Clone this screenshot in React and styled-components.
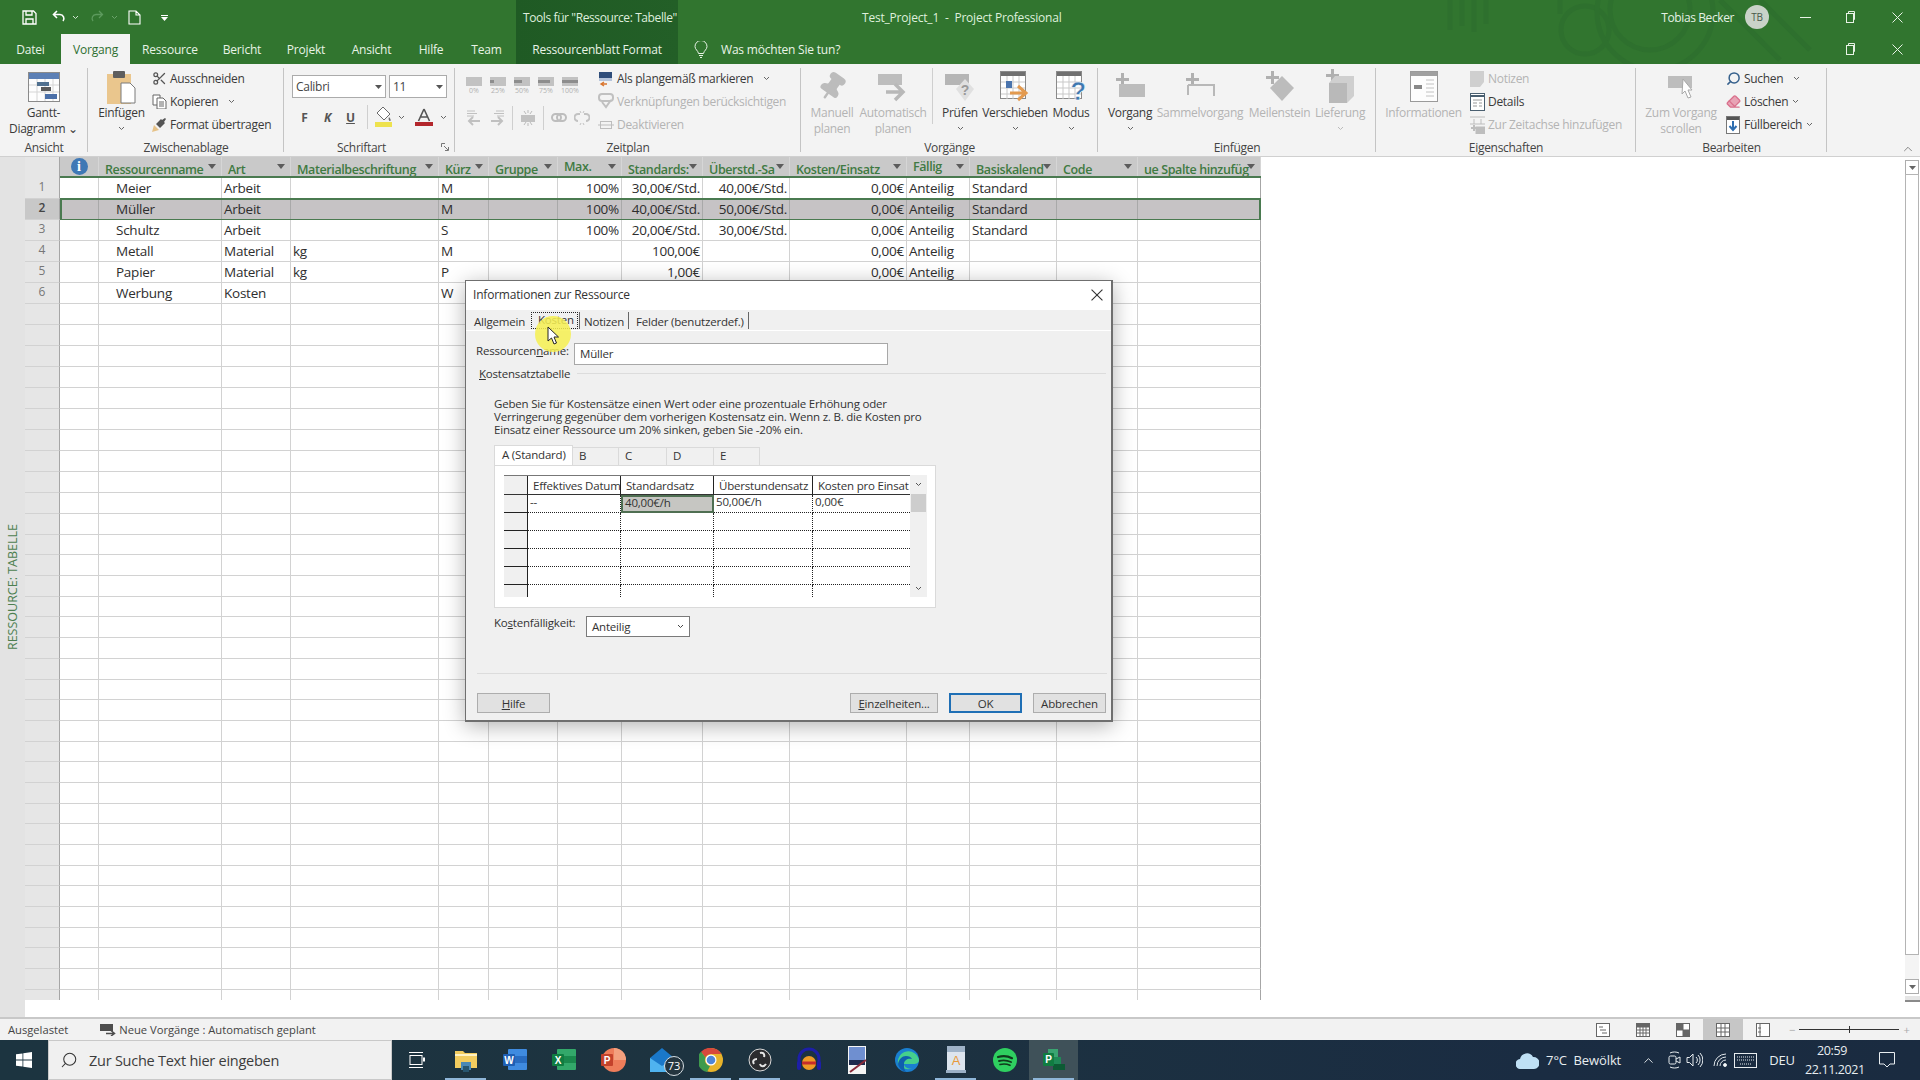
import React from 'react';
import styled, { createGlobalStyle } from 'styled-components';
import { Scissors, Search, ChevronUp, Pin, Eraser } from 'lucide-react';

const UI = '"Open Sans", "Noto Sans", "Liberation Sans", sans-serif';

const GlobalStyle = createGlobalStyle`
  html, body { margin: 0; padding: 0; background: #fff; }
  body { font-family: ${UI}; color: #333; }
  * { box-sizing: border-box; }
`;

const Page = styled.div`
  position: relative;
  width: 1920px;
  height: 1080px;
  overflow: hidden;
  display: flex;
  flex-direction: column;
  background: #fff;
`;

/* ---------- header ---------- */
const Header = styled.header`
  position: relative;
  height: 64px;
  flex: none;
  color: #e4f1e4;
  background: linear-gradient(90deg, #31752f 516px, #1f5a24 516px, #235f27 678px, #31752f 678px);
`;
const Decor = styled.svg`
  position: absolute;
  left: 1440px;
  top: 0;
`;
const TitleRow = styled.div`
  position: relative;
  height: 34px;
  display: flex;
  align-items: center;
  font-size: 12px;
  letter-spacing: -0.2px;
`;
const Quick = styled.div`
  width: 516px;
  display: flex;
  align-items: center;
  padding-left: 22px;
`;
const QuickSlot = styled.span`
  display: flex;
  margin-left: ${(p) => p.$ml || 0}px;
`;
const ContextName = styled.div`
  width: 162px;
  padding-left: 7px;
  white-space: nowrap;
  color: #dfeedd;
  letter-spacing: -0.4px;
`;
const ProjectName = styled.div`
  padding-left: 184px;
  white-space: pre;
  color: #dff0dc;
`;
const UserBox = styled.div`
  margin-left: auto;
  display: flex;
  align-items: center;
`;
const UserName = styled.span`
  color: #e4f1e4;
  letter-spacing: -0.4px;
`;
const Avatar = styled.span`
  width: 24px;
  height: 24px;
  border-radius: 50%;
  margin: 0 13px 0 11px;
  background: #c9d2c8;
  color: #4a5a4a;
  font-size: 10px;
  display: flex;
  align-items: center;
  justify-content: center;
`;
const WinBtn = styled.span`
  width: 46px;
  display: flex;
  justify-content: center;
  color: #e8f3e6;
`;
const TabsRow = styled.nav`
  position: relative;
  height: 30px;
  display: flex;
  align-items: flex-end;
  font-size: 12px;
  letter-spacing: -0.2px;
`;
const Tab = styled.span`
  height: 30px;
  display: flex;
  align-items: center;
  justify-content: center;
  flex: none;
  width: ${(p) => p.$w}px;
  color: ${(p) => (p.$on ? '#2e6f31' : '#e8f3e6')};
  background: ${(p) => (p.$on ? '#f3f3f3' : 'transparent')};
`;
const TellMe = styled.span`
  display: flex;
  align-items: center;
  height: 30px;
  gap: 13px;
  margin-left: 16px;
  color: #eaf4e8;
`;
const DocButtons = styled.div`
  margin-left: auto;
  height: 30px;
  display: flex;
  align-items: center;
`;

/* ---------- ribbon ---------- */
const Ribbon = styled.div`
  position: relative;
  height: 93px;
  flex: none;
  display: flex;
  background: #f3f3f3;
  border-bottom: 1px solid #d0d0d0;
  font-size: 12px;
  letter-spacing: -0.3px;
`;
const Group = styled.section`
  position: relative;
  flex: none;
  width: ${(p) => p.$w}px;
  display: flex;
  flex-direction: column;
  &::after {
    content: '';
    position: absolute;
    right: 0;
    top: 4px;
    bottom: 4px;
    width: 1px;
    background: #c4c4c4;
  }
`;
const GroupBody = styled.div`
  height: 75px;
  display: flex;
  gap: ${(p) => p.$gap ?? 5}px;
  padding: 4px 0 0 ${(p) => p.$pad ?? 10}px;
`;
const GroupLabel = styled.div`
  height: 17px;
  line-height: 17px;
  text-align: center;
  color: #444;
  position: relative;
  letter-spacing: -0.3px;
  padding-right: ${(p) => p.$pr || 0}px;
`;
const Launcher = styled.svg`
  position: absolute;
  right: 6px;
  top: 4px;
`;
const BigBtn = styled.div`
  flex: none;
  width: ${(p) => p.$w}px;
  display: flex;
  flex-direction: column;
  align-items: center;
  color: ${(p) => (p.$off ? '#b4b4b4' : '#3a3a3a')};
  line-height: 16px;
  white-space: nowrap;
  margin-right: ${(p) => p.$mr || 0}px;
`;
const BigIcon = styled.div`
  height: 37px;
  display: flex;
  align-items: center;
  justify-content: center;
`;
const PinGlyph = styled(Pin)`
  transform: rotate(35deg);
`;
const MirrorSearch = styled(Search)`
  transform: scaleX(-1);
`;
const Caret = styled.svg`
  display: block;
  flex: none;
`;
const BigCaret = styled(Caret)`
  margin-top: 5px;
`;
const SmallCol = styled.div`
  display: flex;
  flex-direction: column;
  flex: none;
  margin-top: -1px;
  margin-left: ${(p) => p.$ml || 0}px;
`;
const SmallRow = styled.div`
  height: 23px;
  display: flex;
  align-items: center;
  gap: 3px;
  white-space: nowrap;
  color: ${(p) => (p.$off ? '#b4b4b4' : '#3a3a3a')};
`;
const SmallIcon = styled.span`
  width: 16px;
  height: 18px;
  display: flex;
  align-items: center;
  justify-content: center;
  flex: none;
`;
const RowCaret = styled(Caret)`
  margin-left: 7px;
`;
const TightCaret = styled(Caret)`
  margin-left: 1px;
`;
const FontCol = styled.div`
  display: flex;
  flex-direction: column;
  padding-top: 7px;
`;
const ComboRow = styled.div`
  display: flex;
  gap: 3px;
`;
const Combo = styled.div`
  width: ${(p) => p.$w}px;
  height: 23px;
  background: #fff;
  border: 1px solid #ababab;
  padding: 0 3px;
  display: flex;
  align-items: center;
  justify-content: space-between;
  color: #444;
`;
const FormatRow = styled.div`
  display: flex;
  align-items: center;
  height: 24px;
  margin-top: 7px;
  padding-left: 1px;
`;
const StyleBtn = styled.span`
  width: 23px;
  text-align: center;
  font-weight: 700;
  font-size: 12px;
  color: #555;
  font-style: ${(p) => (p.$i ? 'italic' : 'normal')};
  text-decoration: ${(p) => (p.$u ? 'underline' : 'none')};
`;
const ThinSep = styled.span`
  width: 1px;
  height: ${(p) => p.$h || 24}px;
  background: #cfcfcf;
  flex: none;
  margin: ${(p) => p.$m || '0'};
`;
const PlanCol = styled.div`
  width: 132px;
  flex: none;
  display: flex;
  flex-direction: column;
`;
const PercentRow = styled.div`
  display: flex;
  gap: 8px;
  padding-top: 9px;
`;
const Percent = styled.div`
  width: 16px;
  display: flex;
  flex-direction: column;
  align-items: center;
  font-size: 7px;
  letter-spacing: 0;
  line-height: 10px;
  color: #b0b0b0;
`;
const PlanRow = styled.div`
  display: flex;
  align-items: center;
  margin-top: 10px;
  gap: 7px;
`;
const Collapse = styled.span`
  position: absolute;
  right: 5px;
  bottom: 0;
  color: #666;
  display: flex;
`;

/* ---------- workspace ---------- */
const Workspace = styled.div`
  flex: 1;
  display: flex;
  min-height: 0;
`;
const SideBar = styled.div`
  width: 25px;
  flex: none;
  background: #e3e3e3;
  position: relative;
`;
const ViewName = styled.div`
  position: absolute;
  top: 367px;
  left: 4px;
  writing-mode: vertical-rl;
  transform: rotate(180deg);
  font-size: 12.5px;
  letter-spacing: 0;
  color: #4d7f50;
  white-space: nowrap;
`;
const Sheet = styled.div`
  flex: 1;
  height: 843px;
  overflow: hidden;
`;
const COLS = '35px 39px 123px 69px 148px 50px 69px 64px 81px 87px 117px 63px 87px 81px 123px';
const HeadRow = styled.div`
  display: grid;
  grid-template-columns: ${COLS};
  width: 1236px;
  height: 21px;
  position: relative;
  &::after {
    content: '';
    position: absolute;
    left: 35px;
    right: 0;
    bottom: 0;
    height: 2px;
    background: #4a7a50;
  }
`;
const HeadCorner = styled.div`
  background: #e6e6e6;
  border-right: 1px solid #a6a6a6;
`;
const HeadCell = styled.div`
  background: #c9c9c9;
  position: relative;
  overflow: hidden;
  padding: ${(p) => (p.$up ? '2px' : '5px')} 14px 0 6px;
  color: #3f7a42;
  font-size: 12.5px;
  font-weight: 600;
  letter-spacing: -0.4px;
  white-space: nowrap;
  line-height: 15px;
  border-right: 1px solid #d6d6d6;
`;
const InfoCell = styled.div`
  background: #c9c9c9;
  padding-top: 1px;
  display: flex;
  justify-content: center;
  border-right: 1px solid #d6d6d6;
`;
const FilterMark = styled.i`
  position: absolute;
  right: 5px;
  top: 7px;
  width: 0;
  height: 0;
  border-left: 4px solid transparent;
  border-right: 4px solid transparent;
  border-top: 5px solid #5c5c5c;
`;
const InfoDot = styled.span`
  width: 17px;
  height: 17px;
  border-radius: 50%;
  background: #3f78b5;
  color: #fff;
  font: 700 14px/17px "Liberation Serif", serif;
  text-align: center;
`;
const Row = styled.div`
  display: grid;
  grid-template-columns: ${COLS};
  width: 1236px;
  height: ${(p) => p.$h}px;
  position: relative;
  ${(p) =>
    p.$selected &&
    `&::after {
      content: '';
      position: absolute;
      left: 35px;
      right: 0;
      top: -1px;
      bottom: -1px;
      border: 2px solid #4a7a50;
    }`}
`;
const RowNum = styled.div`
  background: ${(p) => (p.$selected ? '#c8c8c8' : '#e6e6e6')};
  border-bottom: 1px solid #d2d2d2;
  border-right: 1px solid #a6a6a6;
  color: ${(p) => (p.$selected ? '#444' : '#777')};
  font-weight: ${(p) => (p.$selected ? 600 : 400)};
  text-align: center;
  font-size: 12px;
  line-height: 18px;
`;
const Cell = styled.div`
  background: ${(p) => (p.$selected ? '#c6c3c5' : '#fff')};
  border-right: 1px solid ${(p) => (p.$dark ? '#a6a6a6' : p.$selected ? '#a9a9a9' : '#d2d2d2')};
  border-bottom: 1px solid #d2d2d2;
  font-size: 13.5px;
  letter-spacing: -0.25px;
  line-height: 20px;
  color: #2e2e2e;
  white-space: nowrap;
  overflow: hidden;
  text-align: ${(p) => (p.$right ? 'right' : 'left')};
  padding: 0 ${(p) => (p.$right ? 2 : 0)}px 0 ${(p) => p.$pl ?? 2}px;
`;
const VScroll = styled.div`
  width: 15px;
  flex: none;
  height: 845px;
  display: flex;
  flex-direction: column;
  padding-top: 3px;
`;
const ScrollBtn = styled.div`
  width: 14px;
  height: 15px;
  border: 1px solid #adadad;
  background: #fff;
  display: flex;
  align-items: center;
  justify-content: center;
  flex: none;
`;
const ScrollThumb = styled.div`
  width: 14px;
  height: 781px;
  border: 1px solid #b4b4b4;
  background: #fff;
  margin-top: -1px;
  flex: none;
`;
const ScrollRest = styled.div`
  flex: 1;
  width: 14px;
  background: #f4f4f4;
`;
const SplitHandle = styled.div`
  width: 15px;
  height: 6px;
  margin-top: 2px;
  background: #e6e6e6;
  border-bottom: 2px solid #8a8a8a;
  flex: none;
`;

/* ---------- status bar ---------- */
const StatusBar = styled.div`
  height: 23px;
  flex: none;
  border-top: 2px solid #c8c8c8;
  background: #f2f2f2;
  display: flex;
  align-items: center;
  font-size: 11.2px;
  letter-spacing: 0;
  color: #444;
  padding-left: 8px;
`;
const StatusMode = styled.span`
  display: flex;
  align-items: center;
  gap: 3px;
  margin-left: 32px;
`;
const ViewBtns = styled.div`
  margin-left: auto;
  height: 100%;
  display: flex;
  align-items: center;
`;
const ViewBtn = styled.span`
  width: 40px;
  height: 21px;
  display: flex;
  align-items: center;
  justify-content: center;
  background: ${(p) => (p.$on ? '#c6c6c6' : 'transparent')};
`;
const Zoomer = styled.div`
  display: flex;
  align-items: center;
  width: 126px;
  margin-left: 6px;
  margin-right: 5px;
  gap: 4px;
  color: #aaa;
`;
const ZoomLine = styled.span`
  position: relative;
  width: 100px;
  height: 1px;
  background: #333;
  &::after {
    content: '';
    position: absolute;
    left: 50px;
    top: -3px;
    width: 1px;
    height: 7px;
    background: #333;
  }
`;

/* ---------- taskbar ---------- */
const Taskbar = styled.footer`
  height: 40px;
  flex: none;
  display: flex;
  align-items: center;
  background: linear-gradient(90deg, #1c3440, #1d3340 40%, #1a2c42 80%, #1a2b40);
  color: #e8edf0;
`;
const StartBtn = styled.span`
  width: 48px;
  display: flex;
  justify-content: center;
`;
const SearchBox = styled.div`
  width: 344px;
  height: 40px;
  background: #f0f0f0;
  border: 1px solid #c9c9c9;
  display: flex;
  align-items: center;
  gap: 11px;
  padding-left: 11px;
  font-size: 14.5px;
  letter-spacing: -0.25px;
  color: #3c3c3c;
`;
const Slot = styled.span`
  position: relative;
  width: 49px;
  height: 40px;
  display: flex;
  align-items: center;
  justify-content: center;
  flex: none;
  background: ${(p) => (p.$hover ? '#3f5159' : 'transparent')};
  ${(p) =>
    p.$run &&
    `&::after {
      content: '';
      position: absolute;
      left: 4px;
      right: 4px;
      bottom: 0;
      height: 2px;
      background: #8fb6d8;
    }`}
`;
const Badge = styled.span`
  position: absolute;
  right: 2px;
  bottom: 4px;
  width: 20px;
  height: 20px;
  border-radius: 50%;
  border: 1px solid #d6dde2;
  background: #24353f;
  color: #fff;
  font-size: 11px;
  line-height: 18px;
  text-align: center;
`;
const Tray = styled.div`
  margin-left: auto;
  display: flex;
  align-items: center;
  padding-right: 25px;
  font-size: 13px;
  letter-spacing: -0.1px;
`;
const TrayItem = styled.span`
  display: flex;
  align-items: center;
  margin-left: ${(p) => p.$ml || 0}px;
  white-space: pre;
`;
const Clock = styled.div`
  width: 54px;
  margin-left: 10px;
  text-align: center;
  font-size: 12.5px;
  letter-spacing: -0.4px;
  line-height: 19px;
`;

/* ---------- dialog ---------- */
const Dialog = styled.div`
  position: absolute;
  left: 465px;
  top: 280px;
  width: 648px;
  height: 442px;
  background: #f0f0f0;
  border: 1px solid #6f6f6f;
  border-right-width: 2px;
  border-bottom-width: 2px;
  box-shadow: 0 4px 20px rgba(0, 0, 0, 0.3);
  display: flex;
  flex-direction: column;
  font-size: 11.5px;
  letter-spacing: -0.2px;
  color: #333;
`;
const DialogTitle = styled.div`
  height: 29px;
  flex: none;
  background: #fff;
  display: flex;
  align-items: center;
  justify-content: space-between;
  padding: 0 8px 2px 7px;
  font-size: 12px;
`;
const DialogTabs = styled.div`
  height: 21px;
  flex: none;
  display: flex;
  padding: 0 0 0 2px;
  border-bottom: 1px solid #fff;
`;
const DialogTab = styled.div`
  height: 17px;
  margin-top: 2px;
  flex: none;
  width: ${(p) => p.$w}px;
  padding-left: ${(p) => p.$pl || 0}px;
  line-height: 20px;
  white-space: nowrap;
  border-right: ${(p) => (p.$sep ? '1px solid #666' : '0')};
  ${(p) => p.$focus && 'border: 1px dotted #222; line-height: 14px; padding-left: 6px;'}
`;
const DialogBody = styled.div`
  flex: 1;
  display: flex;
  flex-direction: column;
  padding: 12px 5px 7px 10px;
  min-height: 0;
`;
const NameRow = styled.div`
  display: flex;
  height: 22px;
  flex: none;
`;
const NameLabel = styled.span`
  width: 98px;
  padding-top: 0;
  line-height: 16px;
`;
const Underlined = styled.u`
  text-underline-offset: 1px;
`;
const NameInput = styled.div`
  width: 314px;
  height: 22px;
  background: #fff;
  border: 1px solid #a8a8a8;
  padding-left: 5px;
  line-height: 20px;
`;
const Legend = styled.div`
  margin: 0 0 1px 3px;
  height: 16px;
  display: flex;
  align-items: center;
  gap: 7px;
  flex: none;
  &::after {
    content: '';
    flex: 1;
    height: 1px;
    background: #dcdcdc;
  }
`;
const HelpText = styled.p`
  margin: 15px 0 0 18px;
  line-height: 13px;
  white-space: pre-line;
  flex: none;
  font-size: 11.5px;
`;
const RateTabs = styled.div`
  display: flex;
  align-items: flex-end;
  margin: 9px 0 0 18px;
  height: 20px;
  flex: none;
`;
const RateTab = styled.div`
  width: ${(p) => p.$w}px;
  height: ${(p) => (p.$on ? 20 : 18)}px;
  background: ${(p) => (p.$on ? '#fff' : '#f0f0f0')};
  border: 1px solid #dadada;
  border-bottom: 0;
  border-left: ${(p) => (p.$on ? '1px solid #dadada' : '0')};
  padding-left: ${(p) => (p.$on ? 7 : 6)}px;
  line-height: ${(p) => (p.$on ? 17 : 16)}px;
  white-space: nowrap;
`;
const RatePanel = styled.div`
  width: 442px;
  height: 143px;
  margin-left: 18px;
  background: #fff;
  border: 1px solid #dadada;
  padding: 9px 8px 0 9px;
  display: flex;
  flex: none;
`;
const RateGrid = styled.div`
  width: 408px;
  height: 122px;
  overflow: hidden;
  display: grid;
  grid-template-columns: 24px 93px 93px 99px 99px;
  grid-template-rows: 19px repeat(6, 18px);
  border-top: 1px solid #777;
`;
const RateHead = styled.div`
  border-right: 1px solid #222;
  border-bottom: 1px solid #333;
  background: ${(p) => (p.$corner ? '#f0f0f0' : '#fff')};
  padding-left: 5px;
  line-height: 20px;
  white-space: nowrap;
  overflow: hidden;
`;
const RateStub = styled.div`
  background: #f0f0f0;
  border-right: 1px solid #222;
  border-bottom: 1px solid #222;
`;
const RateCell = styled.div`
  border-right: 1px dotted #222;
  border-bottom: 1px dotted #222;
  padding-left: 2px;
  line-height: 14px;
  background: ${(p) => (p.$on ? '#c6c6c2' : '#fff')};
  ${(p) => p.$on && 'border: 2px solid #4f6f52; line-height: 12px;'}
`;
const RateScroll = styled.div`
  width: 17px;
  height: 122px;
  background: #f0f0f0;
  display: flex;
  flex-direction: column;
  align-items: center;
  justify-content: space-between;
  padding: 7px 0 6px;
  position: relative;
`;
const RateThumb = styled.span`
  position: absolute;
  left: 1px;
  right: 1px;
  top: 19px;
  height: 18px;
  background: #cdcdcd;
`;
const DueRow = styled.div`
  display: flex;
  margin: 8px 0 0 18px;
  height: 21px;
  flex: none;
`;
const DueLabel = styled.span`
  width: 92px;
  line-height: 13px;
`;
const DueSelect = styled.div`
  width: 104px;
  height: 21px;
  background: #fff;
  border: 1px solid #7a7a7a;
  padding: 0 5px;
  display: flex;
  align-items: center;
  justify-content: space-between;
`;
const DialogRule = styled.div`
  height: 1px;
  background: #dcdcdc;
  margin: auto 0 19px 1px;
  width: 630px;
  flex: none;
`;
const DialogFooter = styled.div`
  display: flex;
  padding-left: 1px;
  flex: none;
`;
const DialogBtn = styled.div`
  width: ${(p) => p.$w || 73}px;
  height: 20px;
  margin-left: ${(p) => p.$ml || 0}px;
  flex: none;
  background: #e1e1e1;
  border: ${(p) => (p.$primary ? '2px solid #1f6fb5' : '1px solid #adadad')};
  display: flex;
  align-items: center;
  justify-content: center;
`;
const Spotlight = styled.div`
  position: absolute;
  left: 535px;
  top: 316px;
  width: 36px;
  height: 36px;
  border-radius: 50%;
  background: rgba(246, 240, 80, 0.85);
`;
const Pointer = styled.svg`
  position: absolute;
  left: 547px;
  top: 326px;
`;

/* ---------- icons ---------- */
const Chevron = ({ color = '#666', cmp: C = Caret }) => (
  <C width="7" height="5" viewBox="0 0 7 5">
    <path d="M1 1l2.5 2.5L6 1" fill="none" stroke={color} strokeWidth="1" />
  </C>
);
const Tri = ({ color = '#555' }) => (
  <Caret width="7" height="4" viewBox="0 0 7 4">
    <path d="M0 0h7L3.5 4z" fill={color} />
  </Caret>
);

const SaveIcon = () => (
  <svg width="15" height="15" viewBox="0 0 15 15" fill="none" stroke="#fff" strokeWidth="1.3">
    <path d="M1 1h10.5L14 3.5V14H1z" />
    <path d="M4 1v4h6V1M4 14V9h7v5" />
  </svg>
);
const UndoIcon = ({ color = '#fff' }) => (
  <svg width="14" height="14" viewBox="0 0 14 14" fill="none" stroke={color} strokeWidth="1.6">
    <path d="M5 1L1.5 4.5 5 8M2 4.5h6a4 4 0 0 1 3 6.500" />
  </svg>
);
const RedoIcon = () => (
  <svg width="16" height="14" viewBox="0 0 16 14" fill="none" stroke="#5c9a5d" strokeWidth="1.3">
    <path d="M10 1l3.500 3.500L10 8M13 4.500H7a4 4 0 0 0-3 6.500" />
  </svg>
);
const DocIcon = () => (
  <svg width="13" height="15" viewBox="0 0 13 15" fill="none" stroke="#fff" strokeWidth="1.1">
    <path d="M1 1h7l4 4v9H1zM8 1v4h4" />
  </svg>
);
const CustomizeIcon = () => (
  <svg width="7" height="7" viewBox="0 0 7 7">
    <path d="M0 1h7v1H0zM0 3h7L3.500 7z" fill="#fff" />
  </svg>
);
const MinIcon = () => (
  <svg width="11" height="11" viewBox="0 0 11 11"><path d="M0 5.500h11" stroke="#e8f3e6" /></svg>
);
const RestoreIcon = () => (
  <svg width="11" height="12" viewBox="0 0 11 12" fill="none" stroke="#e8f3e6">
    <rect x="0.500" y="2.500" width="7" height="9" />
    <path d="M2.500 2.500V.500h6v8h-1" />
  </svg>
);
const CloseIcon = ({ color = '#e8f3e6', s = 11 }) => (
  <svg width={s} height={s} viewBox="0 0 11 11" stroke={color}>
    <path d="M.500.500l10 10M10.500.500l-10 10" />
  </svg>
);
const BulbIcon = () => (
  <svg width="14" height="17" viewBox="0 0 14 17" fill="none" stroke="#e8f3e6">
    <path d="M4.500 12.500C4 9.500 1 8.500 1 5.500a6 6 0 0 1 12 0c0 3-3 4-3.500 7zM5 14.500h4M6 16.500h2" />
  </svg>
);
const GanttIcon = () => (
  <svg width="32" height="30" viewBox="0 0 32 30">
    <rect x="0.500" y="0.500" width="31" height="29" fill="#fdfdfd" stroke="#8a8a8a" />
    <rect x="1" y="1" width="30" height="6" fill="#5b7fb5" />
    <path d="M1 13h30M1 20h30M9 7v22M17 7v22M25 7v22" stroke="#d5d5d5" />
    <rect x="9" y="10" width="12" height="4" fill="#50708f" />
    <rect x="13" y="15" width="10" height="4" fill="#5a5a5a" />
    <rect x="17" y="22" width="12" height="5" fill="#4a6fa8" />
  </svg>
);
const ClipboardIcon = () => (
  <svg width="29" height="34" viewBox="0 0 29 34">
    <rect x="0" y="4" width="24" height="30" fill="#eac68d" />
    <rect x="6" y="1" width="12" height="7" rx="1" fill="#5e5e5e" />
    <path d="M14 13h9l5 5v15H14z" fill="#fff" stroke="#7a7a7a" />
  </svg>
);
const CopyIcon = () => (
  <svg width="15" height="15" viewBox="0 0 15 15" fill="#fff" stroke="#666">
    <path d="M1 1h7v10H1z" />
    <path d="M5 4h6l3 3v8H5zM7 8h5M7 10h5M7 12h5" />
  </svg>
);
const PainterIcon = () => (
  <svg width="16" height="16" viewBox="0 0 16 16">
    <path d="M1 15l2-7 5 5z" fill="#e6c288" />
    <path d="M5 7l5-5 1 1 3-2 1 1-2 3 1 1-5 5z" fill="#555" />
  </svg>
);
const FillIcon = () => (
  <svg width="17" height="22" viewBox="0 0 17 22">
    <path d="M8 1l7 7-6 6-7-7z" fill="#fff" stroke="#6b6b6b" />
    <path d="M14 11c2 2 2 4 1 4s-2-2-1-4z" fill="#6b6b6b" />
    <rect x="0" y="16" width="17" height="5" fill="#eee24e" />
  </svg>
);
const FontColorIcon = () => (
  <svg width="18" height="18" viewBox="0 0 18 18">
    <path d="M9 1L3.500 13M9 1l5.500 12M5.500 9h7" fill="none" stroke="#555" strokeWidth="1.600" />
    <rect y="14" width="18" height="4" fill="#b3262c" />
  </svg>
);
const PercentBar = ({ fill }) => (
  <svg width="16" height="9" viewBox="0 0 16 9">
    <rect width="16" height="9" fill="#c2c2c2" />
    <rect y="3" width={fill} height="3" fill="#8d8d8d" />
  </svg>
);
const IndentIcon = ({ flip }) => (
  <svg width="16" height="16" viewBox="0 0 16 16" fill="none" stroke="#c0c0c0" transform={flip ? 'scale(-1 1)' : undefined}>
    <path d="M1 1h8M1 3.500h10M1 6h7" />
    <path d="M14 11H3M7 7l-4 4 4 4" strokeWidth="2" />
  </svg>
);
const GrayBars = () => (
  <svg width="16" height="16" viewBox="0 0 16 16">
    <rect x="1" y="5" width="14" height="7" fill="#c2c2c2" />
    <path d="M4 1l2 3M12 1l-2 3M8 0v3M4 15l2-3M12 15l-2-3M8 13v3" stroke="#bbb" />
  </svg>
);
const LinkIcon = () => (
  <svg width="16" height="12" viewBox="0 0 16 12" fill="none" stroke="#bdbdbd" strokeWidth="2">
    <rect x="1" y="2" width="9" height="7" rx="3.500" />
    <rect x="6" y="2" width="9" height="7" rx="3.500" />
  </svg>
);
const UnlinkIcon = () => (
  <svg width="16" height="16" viewBox="0 0 16 16" fill="none" stroke="#c2c2c2" strokeWidth="2">
    <path d="M6 4H4a3 3 0 0 0 0 7M10 4h2a3 3 0 0 1 0 7" />
    <path d="M6 1l1 2M10 1L9 3M6 15l1-2M10 15l-1-2" strokeWidth="1" />
  </svg>
);
const BaselineIcon = () => (
  <svg width="16" height="16" viewBox="0 0 16 16">
    <rect x="1" y="1" width="13" height="6" fill="#2f4d7a" />
    <rect x="1" y="7" width="13" height="3" fill="#b7c5db" />
    <path d="M9 13H3M6 11l-3 2 3 2" stroke="#d9762f" fill="none" strokeWidth="1.400" />
  </svg>
);
const LinkCheckIcon = () => (
  <svg width="16" height="17" viewBox="0 0 16 17" fill="none" stroke="#c0c0c0" strokeWidth="2">
    <rect x="1" y="1" width="14" height="7" rx="3" />
    <path d="M4 9l4 5 5-7" />
  </svg>
);
const DeactivateIcon = () => (
  <svg width="16" height="10" viewBox="0 0 16 10" fill="none" stroke="#bdbdbd">
    <rect x="2.500" y="1.500" width="11" height="7" />
    <path d="M0 5h16" />
  </svg>
);
const AutoIcon = () => (
  <svg width="30" height="30" viewBox="0 0 30 30">
    <rect x="0" y="2" width="24" height="11" fill="#bdbdbd" />
    <path d="M8 20h16M17 12l8 8-8 8" fill="none" stroke="#b8b8b8" strokeWidth="3.500" />
  </svg>
);
const InspectIcon = () => (
  <svg width="30" height="32" viewBox="0 0 30 32">
    <rect x="0" y="3" width="24" height="11" fill="#b5b5b5" />
    <path d="M20 8l9 10-9 12-9-12z" fill="#e0e0e0" />
    <text x="20" y="24" fontSize="14" fontFamily="Liberation Sans" fontWeight="700" textAnchor="middle" fill="#9a9a9a">?</text>
  </svg>
);
const CalendarBase = () => (
  <>
    <rect x="0.500" y="0.500" width="25" height="27" fill="#fff" stroke="#8a8a8a" />
    <rect x="1" y="1" width="24" height="4" fill="#6f6f6f" />
    <path d="M1 11h24M1 17h24M1 23h24M7 5v23M13 5v23M19 5v23" stroke="#c9c9c9" />
  </>
);
const MoveIcon = () => (
  <svg width="30" height="32" viewBox="0 0 30 32">
    <CalendarBase />
    <rect x="6" y="10" width="6" height="7" fill="#4a74ad" />
    <path d="M10 22h14M18 15l8 7-8 7" fill="none" stroke="#e39a4f" strokeWidth="3" />
  </svg>
);
const ModeIcon = () => (
  <svg width="30" height="32" viewBox="0 0 30 32">
    <CalendarBase />
    <text x="22" y="29" fontSize="26" fontFamily="Liberation Sans" fontWeight="700" textAnchor="middle" fill="#3f78b0" stroke="#fff" strokeWidth="0.500">?</text>
  </svg>
);
const Plus = () => <path d="M6 0h3v5h5v3H9v5H6V8H1V5h5z" fill="#b0b0b0" />;
const TaskAddIcon = ({ dark }) => (
  <svg width="30" height="28" viewBox="0 0 30 28">
    <Plus />
    <rect x="4" y="11" width="26" height="13" fill={dark ? '#a8a8a8' : '#bcbcbc'} />
  </svg>
);
const SummaryIcon = () => (
  <svg width="30" height="28" viewBox="0 0 30 28">
    <Plus />
    <path d="M3 12h26v11M3 12v10" fill="none" stroke="#b8b8b8" strokeWidth="2" />
  </svg>
);
const MilestoneIcon = () => (
  <svg width="30" height="32" viewBox="0 0 30 32">
    <Plus />
    <path d="M17 5l12 12-12 13-12-13z" fill="#bcbcbc" />
  </svg>
);
const DeliveryIcon = () => (
  <svg width="30" height="36" viewBox="0 0 30 36">
    <Plus />
    <path d="M4 14h18v20H4z" fill="#b9b9b9" />
    <path d="M22 14l7-7H10l-6 7zM22 14v20l7-7V7z" fill="#cfcfcf" />
  </svg>
);
const InfoPanelIcon = () => (
  <svg width="28" height="31" viewBox="0 0 28 31" fill="none">
    <rect x="0.500" y="0.500" width="27" height="30" fill="#fdfdfd" stroke="#9a9a9a" />
    <rect x="1" y="1" width="26" height="4" fill="#a0a0a0" />
    <rect x="4" y="14" width="8" height="4" fill="#888" />
    <path d="M16 9h8M16 13h8M16 17h8M16 21h8M16 25h8" stroke="#c2c2c2" />
  </svg>
);
const NotesIcon = () => (
  <svg width="14" height="16" viewBox="0 0 14 16">
    <path d="M0 0h14v11l-4 5H0z" fill="#cfcfcf" />
  </svg>
);
const DetailsIcon = () => (
  <svg width="15" height="18" viewBox="0 0 15 18" fill="#fff" stroke="#4a5f70">
    <rect x="0.500" y="0.500" width="14" height="17" />
    <path d="M1 3h13" strokeWidth="2" />
    <path d="M3 7h9M3 10h4M9 10h3M3 13h4M9 13h3" stroke="#999" />
  </svg>
);
const TimelineIcon = () => (
  <svg width="15" height="18" viewBox="0 0 15 18" fill="none" stroke="#bdbdbd">
    <path d="M0 1h15M4 3v5M11 3v5M0 8h15" />
    <rect x="6" y="11" width="9" height="7" fill="#bdbdbd" />
    <path d="M1 12h6M4 9v6" strokeWidth="2" />
  </svg>
);
const ScrollToIcon = () => (
  <svg width="26" height="30" viewBox="0 0 26 30">
    <rect x="0" y="4" width="24" height="12" fill="#bdbdbd" />
    <path d="M15 7l9 11h-4l3 7-3 1-3-7-3 3z" fill="#fff" stroke="#a8a8a8" />
  </svg>
);
const FillDownIcon = () => (
  <svg width="14" height="18" viewBox="0 0 14 18">
    <rect x="0.500" y="0.500" width="13" height="17" fill="#fff" stroke="#777" />
    <rect x="1" y="1" width="12" height="3" fill="#555" />
    <path d="M7 5v9M3.500 10L7 14l3.500-4" fill="none" stroke="#2f6eb0" strokeWidth="2" />
  </svg>
);
const ModeTagIcon = () => (
  <svg width="16" height="13" viewBox="0 0 16 13">
    <rect y="1" width="13" height="7" fill="#4d4d4d" />
    <path d="M6 10.500h8M11 7.500l3.500 3L11 13" fill="none" stroke="#4d4d4d" strokeWidth="1.500" />
  </svg>
);
const ViewIcon = ({ kind }) => (
  <svg width="14" height="14" viewBox="0 0 14 14" fill="#fff" stroke="#666">
    <rect x="0.500" y="0.500" width="13" height="13" />
    {kind === 'gantt' && <path d="M3 4h4M4 7h6M6 10h5" />}
    {kind === 'cal' && (
      <>
        <rect x="1" y="1" width="12" height="3" fill="#666" />
        <path d="M1 7h12M1 10h12M4 4v10M7 4v10M10 4v10" />
      </>
    )}
    {kind === 'split' && (
      <>
        <rect x="1" y="1" width="6" height="6" fill="#666" />
        <rect x="7" y="7" width="6" height="6" fill="#666" />
      </>
    )}
    {kind === 'grid' && <path d="M1 5h12M1 9h12M5 1v12M9 1v12" fill="none" />}
    {kind === 'form' && <path d="M4 1v12M2 5h3M2 9h3" />}
  </svg>
);

const WinLogo = () => (
  <svg width="16" height="16" viewBox="0 0 16 16" fill="#fff">
    <path d="M0 2.300l6.500-.9v6.200H0zM7.300 1.300L16 0v7.600H7.300zM0 8.400h6.500v6.200L0 13.700zM7.300 8.400H16V16l-8.700-1.300z" />
  </svg>
);
const TaskViewIcon = () => (
  <svg width="16" height="18" viewBox="0 0 16 18" fill="none" stroke="#fff">
    <path d="M0 1.500h14M0 16.500h14" />
    <rect x="1" y="4.500" width="12" height="9" />
    <rect x="14.500" y="7" width="1.500" height="3" fill="#fff" />
  </svg>
);
const LetterTile = ({ bg, side, letter }) => (
  <svg width="24" height="24" viewBox="0 0 24 24">
    <rect x="5" y="1" width="19" height="21" rx="1" fill={side} />
    <rect x="5" y="8" width="19" height="7" fill={bg} opacity="0.7" />
    <rect x="0" y="6" width="12" height="12" rx="1" fill={bg} />
    <text x="6" y="16" textAnchor="middle" fontSize="10" fontWeight="700" fontFamily="Liberation Sans" fill="#fff">{letter}</text>
  </svg>
);
const FolderIcon = () => (
  <svg width="24" height="24" viewBox="0 0 24 24">
    <path d="M1 3h8l2 2h12v15H1z" fill="#f2cc5f" />
    <rect x="1" y="6" width="22" height="2" fill="#fff2c4" />
    <rect x="7" y="14" width="10" height="8" fill="#4a88b5" />
    <rect x="9" y="18" width="6" height="6" fill="#27556f" />
  </svg>
);
const PptIcon = () => (
  <svg width="26" height="26" viewBox="0 0 26 26">
    <circle cx="14" cy="13" r="12" fill="#ee7d5a" />
    <path d="M14 1a12 12 0 0 1 12 12H14z" fill="#f3a07e" />
    <rect x="1" y="7" width="12" height="12" rx="1" fill="#c4422b" />
    <text x="7" y="17" textAnchor="middle" fontSize="10" fontWeight="700" fontFamily="Liberation Sans" fill="#fff">P</text>
  </svg>
);
const MailIcon = () => (
  <svg width="26" height="26" viewBox="0 0 26 26">
    <path d="M13 1L1 11v14h24V11z" fill="#1a78c9" />
    <path d="M1 11l12 8 12-8v14H1z" fill="#4fb3ef" />
  </svg>
);
const ChromeIcon = () => (
  <svg width="24" height="24" viewBox="0 0 24 24">
    <circle cx="12" cy="12" r="12" fill="#e8b32a" />
    <path d="M12 0a12 12 0 0 1 10.400 6H12a6 6 0 0 0-5.500 3.500L2 3.700A12 12 0 0 1 12 0z" fill="#d8483c" />
    <path d="M2 3.700l4.500 5.800A6 6 0 0 0 11 18l-3 6A12 12 0 0 1 2 3.700z" fill="#3f9a4d" />
    <circle cx="12" cy="12" r="5.500" fill="#fff" />
    <circle cx="12" cy="12" r="4.300" fill="#4f86d8" />
  </svg>
);
const ObsIcon = () => (
  <svg width="24" height="24" viewBox="0 0 24 24" fill="none">
    <circle cx="12" cy="12" r="11" fill="#2b2b2e" stroke="#d8d8d8" />
    <path d="M12 5c3-1 5 1 4 4M6 16c-2-3 0-5 3-5M18 16c-2 3-5 3-6 0" stroke="#e5e5e5" strokeWidth="2" />
  </svg>
);
const AudacityIcon = () => (
  <svg width="26" height="26" viewBox="0 0 26 26" fill="none">
    <path d="M3 18V12a10 10 0 0 1 20 0v6" stroke="#1d1fa8" strokeWidth="3" />
    <circle cx="13" cy="16" r="7" fill="#ef9a26" />
    <path d="M6 16h14" stroke="#c62c2c" strokeWidth="3" />
    <rect x="1" y="14" width="4" height="9" rx="2" fill="#1d1fa8" />
    <rect x="21" y="14" width="4" height="9" rx="2" fill="#1d1fa8" />
  </svg>
);
const PaintDocIcon = () => (
  <svg width="20" height="28" viewBox="0 0 20 28">
    <rect width="18" height="28" fill="#f5f5f5" />
    <rect x="1" y="1" width="16" height="13" fill="#6f8fd0" />
    <rect x="1" y="14" width="16" height="5" fill="#1e2a4d" />
    <path d="M2 26l16-12" stroke="#8a2a3a" strokeWidth="2" />
  </svg>
);
const EdgeIcon = () => (
  <svg width="24" height="24" viewBox="0 0 24 24">
    <circle cx="12" cy="12" r="12" fill="#1a7fd0" />
    <path d="M3 16a10 10 0 0 1 21-4c0 3-3 4-5 4H9c0 3 5 6 9 4a12 12 0 0 1-15-4z" fill="#45d08c" />
    <path d="M9 16c0-4 4-6 8-5-1-2-3-3-6-3-4 0-7 3-8 8 1 4 4 7 8 8-2-2-2-5-2-8z" fill="#0f5fae" />
  </svg>
);
const NoteDocIcon = () => (
  <svg width="20" height="28" viewBox="0 0 20 28">
    <rect x="1" y="0" width="18" height="26" fill="#dde5ee" />
    <rect x="1" y="0" width="18" height="6" fill="#9fb3c8" />
    <text x="10" y="19" textAnchor="middle" fontSize="13" fontFamily="Liberation Sans" fill="#e89a3a">A</text>
    <rect x="0" y="24" width="20" height="3" fill="#9bb0c6" />
  </svg>
);
const SpotifyIcon = () => (
  <svg width="24" height="24" viewBox="0 0 24 24" fill="none" stroke="#103a1c" strokeLinecap="round">
    <circle cx="12" cy="12" r="12" fill="#2fd060" stroke="none" />
    <path d="M5 9c5-1.500 10-1 14 1.200" strokeWidth="2.200" />
    <path d="M6 13c4-1 8-.8 12 1" strokeWidth="1.900" />
    <path d="M7 16.500c3-.8 7-.6 10 .8" strokeWidth="1.600" />
  </svg>
);
const ProjectIcon = () => (
  <svg width="24" height="24" viewBox="0 0 24 24">
    <rect x="6" y="1" width="10" height="8" fill="#3aa471" />
    <rect x="9" y="9" width="10" height="7" fill="#1f8a57" />
    <rect x="11" y="16" width="12" height="6" fill="#0d5a34" />
    <rect x="1" y="5" width="11" height="13" rx="1" fill="#107c41" />
    <text x="6.500" y="15" textAnchor="middle" fontSize="10" fontWeight="700" fontFamily="Liberation Sans" fill="#fff">P</text>
  </svg>
);
const CloudIcon = () => (
  <svg width="23" height="18" viewBox="0 0 23 18">
    <path d="M5 18a5 5 0 0 1-1-10 7 7 0 0 1 13-2 6 6 0 0 1 1 12z" fill="#bfe0f5" />
  </svg>
);
const MeetIcon = () => (
  <svg width="13" height="20" viewBox="0 0 13 20" fill="none" stroke="#e8edf0">
    <path d="M2 3a6 3 0 0 1 9 0M2 17a6 3 0 0 0 9 0" />
    <rect x="1" y="6" width="7" height="8" rx="1.500" />
    <path d="M8 9l4-2v6l-4-2" />
  </svg>
);
const SpeakerIcon = () => (
  <svg width="17" height="16" viewBox="0 0 17 16" fill="none" stroke="#e8edf0">
    <path d="M1 5.500h2.500L7 2v12l-3.500-3.500H1zM10 5a4 4 0 0 1 0 6M12 3a7 7 0 0 1 0 10M14 1a10 10 0 0 1 0 14" />
  </svg>
);
const WifiIcon = () => (
  <svg width="14" height="14" viewBox="0 0 14 14" fill="none" stroke="#dfe5e9">
    <path d="M1 13A12 12 0 0 1 13 1M4 13a9 9 0 0 1 9-9M7 13a6 6 0 0 1 6-6" />
    <circle cx="12" cy="12" r="1.500" fill="#fff" />
  </svg>
);
const KeyboardIcon = () => (
  <svg width="23" height="15" viewBox="0 0 23 15" fill="none" stroke="#e8edf0">
    <rect x="0.500" y="0.500" width="22" height="14" />
    <path d="M3 4h17M3 7h17M6 11h11" strokeDasharray="1 1" />
  </svg>
);
const NotifyIcon = () => (
  <svg width="16" height="16" viewBox="0 0 16 16" fill="none" stroke="#e8edf0">
    <path d="M.500.500h15v11.500H11l-3 3-3-3H.500z" />
  </svg>
);

/* ---------- data ---------- */
const HEADERS = [
  { t: 'Ressourcenname' }, { t: 'Art' }, { t: 'Materialbeschriftung' }, { t: 'Kürz' }, { t: 'Gruppe' },
  { t: 'Max.', up: true }, { t: 'Standards:' }, { t: 'Überstd.-Sa' }, { t: 'Kosten/Einsatz' },
  { t: 'Fällig', up: true }, { t: 'Basiskalend' }, { t: 'Code' }, { t: 'ue Spalte hinzufüg' },
];
const RESOURCES = [
  ['Meier', 'Arbeit', '', 'M', '', '100%', '30,00€/Std.', '40,00€/Std.', '0,00€', 'Anteilig', 'Standard'],
  ['Müller', 'Arbeit', '', 'M', '', '100%', '40,00€/Std.', '50,00€/Std.', '0,00€', 'Anteilig', 'Standard'],
  ['Schultz', 'Arbeit', '', 'S', '', '100%', '20,00€/Std.', '30,00€/Std.', '0,00€', 'Anteilig', 'Standard'],
  ['Metall', 'Material', 'kg', 'M', '', '', '100,00€', '', '0,00€', 'Anteilig', ''],
  ['Papier', 'Material', 'kg', 'P', '', '', '1,00€', '', '0,00€', 'Anteilig', ''],
  ['Werbung', 'Kosten', '', 'W', '', '', '', '', '', '', ''],
];
const RIGHT_COLS = [5, 6, 7, 8];
const BLANK = Array(11).fill('');
const ROW_COUNT = 40;

const SheetRow = ({ index, values }) => {
  const selected = index === 1;
  return (
    <Row $selected={selected} $h={index < 16 ? 21 : 20.7}>
      <RowNum $selected={selected}>{values ? index + 1 : ''}</RowNum>
      <Cell $selected={selected} />
      {(values || BLANK).map((v, i) => (
        <Cell key={i} $selected={selected} $right={RIGHT_COLS.includes(i)} $pl={i === 0 ? 17 : 2}>
          {v}
        </Cell>
      ))}
      <Cell $selected={selected} />
      <Cell $selected={selected} $dark />
    </Row>
  );
};

const Big = ({ w, off, icon, lines, caret, mr }) => (
  <BigBtn $w={w} $off={off} $mr={mr}>
    <BigIcon>{icon}</BigIcon>
    {lines.map((l) => (
      <span key={l}>{l}</span>
    ))}
    {caret && <Chevron color={off ? '#bbb' : '#666'} cmp={BigCaret} />}
  </BigBtn>
);

const Small = ({ icon, children, off, caret, tight }) => (
  <SmallRow $off={off}>
    <SmallIcon>{icon}</SmallIcon>
    {children}
    {caret && <Chevron cmp={tight ? TightCaret : RowCaret} />}
  </SmallRow>
);

const TASK_APPS = [
  { key: 'view', icon: <TaskViewIcon /> },
  { key: 'folder', icon: <FolderIcon />, run: true },
  { key: 'word', icon: <LetterTile bg="#1f5fb4" side="#3f8be0" letter="W" /> },
  { key: 'excel', icon: <LetterTile bg="#107c41" side="#33a86a" letter="X" /> },
  { key: 'ppt', icon: <PptIcon /> },
  { key: 'mail', icon: <MailIcon />, badge: '73' },
  { key: 'chrome', icon: <ChromeIcon />, run: true },
  { key: 'obs', icon: <ObsIcon />, run: true },
  { key: 'audacity', icon: <AudacityIcon /> },
  { key: 'paint', icon: <PaintDocIcon /> },
  { key: 'edge', icon: <EdgeIcon /> },
  { key: 'note', icon: <NoteDocIcon />, run: true },
  { key: 'spotify', icon: <SpotifyIcon /> },
  { key: 'project', icon: <ProjectIcon />, run: true, hover: true },
];

const RATE_ROWS = [
  ['--', '40,00€/h', '50,00€/h', '0,00€'],
  ['', '', '', ''],
  ['', '', '', ''],
  ['', '', '', ''],
  ['', '', '', ''],
  ['', '', '', ''],
];

export default function App() {
  return (
    <Page>
      <GlobalStyle />
      <Header>
        <Decor width="400" height="64" viewBox="0 0 400 64" fill="none" stroke="#2e702e" strokeWidth="5">
          <path d="M10 0v30M22 0v26M34 0v32M46 0v24M120 0v14" />
          <circle cx="145" cy="30" r="24" />
          <circle cx="210" cy="10" r="40" />
          <circle cx="215" cy="12" r="58" />
          <path d="M280 0l60 60M320 0l50 50" />
        </Decor>
        <TitleRow>
          <Quick>
            <QuickSlot><SaveIcon /></QuickSlot>
            <QuickSlot $ml={15}><UndoIcon /></QuickSlot>
            <QuickSlot $ml={6}><Chevron color="#cfe3cf" /></QuickSlot>
            <QuickSlot $ml={10}><RedoIcon /></QuickSlot>
            <QuickSlot $ml={6}><Chevron color="#6ba36b" /></QuickSlot>
            <QuickSlot $ml={10}><DocIcon /></QuickSlot>
            <QuickSlot $ml={20}><CustomizeIcon /></QuickSlot>
          </Quick>
          <ContextName>Tools für "Ressource: Tabelle"</ContextName>
          <ProjectName>Test_Project_1  -  Project Professional</ProjectName>
          <UserBox>
            <UserName>Tobias Becker</UserName>
            <Avatar>TB</Avatar>
            <WinBtn><MinIcon /></WinBtn>
            <WinBtn><RestoreIcon /></WinBtn>
            <WinBtn><CloseIcon /></WinBtn>
          </UserBox>
        </TitleRow>
        <TabsRow>
          <Tab $w={61}>Datei</Tab>
          <Tab $w={69} $on>Vorgang</Tab>
          <Tab $w={80}>Ressource</Tab>
          <Tab $w={64}>Bericht</Tab>
          <Tab $w={64}>Projekt</Tab>
          <Tab $w={67}>Ansicht</Tab>
          <Tab $w={52}>Hilfe</Tab>
          <Tab $w={59}>Team</Tab>
          <Tab $w={162}>Ressourcenblatt Format</Tab>
          <TellMe><BulbIcon />Was möchten Sie tun?</TellMe>
          <DocButtons>
            <WinBtn><RestoreIcon /></WinBtn>
            <WinBtn><CloseIcon /></WinBtn>
          </DocButtons>
        </TabsRow>
      </Header>

      <Ribbon>
        <Group $w={88}>
          <GroupBody $pad={0}>
            <Big w={87} icon={<GanttIcon />} lines={['Gantt-', 'Diagramm ⌄']} />
          </GroupBody>
          <GroupLabel>Ansicht</GroupLabel>
        </Group>
        <Group $w={196}>
          <GroupBody $pad={10} $gap={6}>
            <Big w={47} icon={<ClipboardIcon />} lines={['Einfügen']} caret />
            <SmallCol>
              <Small icon={<Scissors size={15} color="#555" />}>Ausschneiden</Small>
              <Small icon={<CopyIcon />} caret>Kopieren</Small>
              <Small icon={<PainterIcon />}>Format übertragen</Small>
            </SmallCol>
          </GroupBody>
          <GroupLabel>Zwischenablage</GroupLabel>
        </Group>
        <Group $w={171}>
          <GroupBody $pad={8} $gap={0}>
            <FontCol>
              <ComboRow>
                <Combo $w={94}>Calibri<Tri /></Combo>
                <Combo $w={58}>11<Tri /></Combo>
              </ComboRow>
              <FormatRow>
                <StyleBtn>F</StyleBtn>
                <StyleBtn $i>K</StyleBtn>
                <StyleBtn $u>U</StyleBtn>
                <ThinSep $m="0 7px 0 5px" />
                <FillIcon />
                <QuickSlot $ml={6}><Chevron /></QuickSlot>
                <QuickSlot $ml={10}><FontColorIcon /></QuickSlot>
                <QuickSlot $ml={7}><Chevron /></QuickSlot>
              </FormatRow>
            </FontCol>
          </GroupBody>
          <GroupLabel $pr={16}>
            Schriftart
            <Launcher width="8" height="8" viewBox="0 0 8 8" fill="none" stroke="#777">
              <path d="M.500 4V.500H4M3 3l4 4M7.500 4v3.500H4" />
            </Launcher>
          </GroupLabel>
        </Group>
        <Group $w={346}>
          <GroupBody $pad={11} $gap={0}>
            <PlanCol>
              <PercentRow>
                {[['0%', 0], ['25%', 4], ['50%', 8], ['75%', 12], ['100%', 16]].map(([l, f]) => (
                  <Percent key={l}><PercentBar fill={f} />{l}</Percent>
                ))}
              </PercentRow>
              <PlanRow>
                <IndentIcon />
                <IndentIcon flip />
                <ThinSep />
                <GrayBars />
                <ThinSep />
                <LinkIcon />
                <UnlinkIcon />
              </PlanRow>
            </PlanCol>
            <SmallCol>
              <Small icon={<BaselineIcon />} caret>Als plangemäß markieren</Small>
              <Small icon={<LinkCheckIcon />} off>Verknüpfungen berücksichtigen</Small>
              <Small icon={<DeactivateIcon />} off>Deaktivieren</Small>
            </SmallCol>
          </GroupBody>
          <GroupLabel>Zeitplan</GroupLabel>
        </Group>
        <Group $w={297}>
          <GroupBody $pad={9}>
            <Big w={44} off icon={<PinGlyph size={30} fill="#bcbcbc" color="#bcbcbc" />} lines={['Manuell', 'planen']} />
            <Big w={68} off icon={<AutoIcon />} lines={['Automatisch', 'planen']} />
            <ThinSep $h={56} $m="0 4px 0 0" />
            <Big w={36} icon={<InspectIcon />} lines={['Prüfen']} caret />
            <Big w={64} icon={<MoveIcon />} lines={['Verschieben']} caret />
            <Big w={38} icon={<ModeIcon />} lines={['Modus']} caret />
          </GroupBody>
          <GroupLabel>Vorgänge</GroupLabel>
        </Group>
        <Group $w={278}>
          <GroupBody $pad={10}>
            <Big w={44} icon={<TaskAddIcon />} lines={['Vorgang']} caret />
            <Big w={86} off icon={<SummaryIcon />} lines={['Sammelvorgang']} mr={1} />
            <Big w={61} off icon={<MilestoneIcon />} lines={['Meilenstein']} />
            <Big w={50} off icon={<DeliveryIcon />} lines={['Lieferung']} caret />
          </GroupBody>
          <GroupLabel>Einfügen</GroupLabel>
        </Group>
        <Group $w={260}>
          <GroupBody $pad={10} $gap={0}>
            <Big w={75} off icon={<InfoPanelIcon />} lines={['Informationen']} />
            <SmallCol $ml={8}>
              <Small icon={<NotesIcon />} off>Notizen</Small>
              <Small icon={<DetailsIcon />}>Details</Small>
              <Small icon={<TimelineIcon />} off>Zur Zeitachse hinzufügen</Small>
            </SmallCol>
          </GroupBody>
          <GroupLabel>Eigenschaften</GroupLabel>
        </Group>
        <Group $w={191}>
          <GroupBody $pad={9} $gap={0}>
            <Big w={72} off icon={<ScrollToIcon />} lines={['Zum Vorgang', 'scrollen']} />
            <SmallCol $ml={8}>
              <Small icon={<MirrorSearch size={15} color="#35608c" strokeWidth={2.4} />} caret>Suchen</Small>
              <Small icon={<Eraser size={15} color="#d9708c" fill="#e8a3b5" />} caret tight>Löschen</Small>
              <Small icon={<FillDownIcon />} caret tight>Füllbereich</Small>
            </SmallCol>
          </GroupBody>
          <GroupLabel>Bearbeiten</GroupLabel>
        </Group>
        <Collapse><ChevronUp size={14} strokeWidth={1.3} /></Collapse>
      </Ribbon>

      <Workspace>
        <SideBar>
          <ViewName>RESSOURCE: TABELLE</ViewName>
        </SideBar>
        <Sheet>
          <HeadRow>
            <HeadCorner />
            <InfoCell><InfoDot>i</InfoDot></InfoCell>
            {HEADERS.map((h) => (
              <HeadCell key={h.t} $up={h.up}>
                {h.t}
                <FilterMark />
              </HeadCell>
            ))}
          </HeadRow>
          {Array.from({ length: ROW_COUNT }, (_, i) => (
            <SheetRow key={i} index={i} values={RESOURCES[i]} />
          ))}
        </Sheet>
        <VScroll>
          <ScrollBtn><Tri color="#666" /></ScrollBtn>
          <ScrollThumb />
          <ScrollRest />
          <ScrollBtn><Tri color="#666" /></ScrollBtn>
          <SplitHandle />
        </VScroll>
      </Workspace>

      <StatusBar>
        Ausgelastet
        <StatusMode><ModeTagIcon />Neue Vorgänge : Automatisch geplant</StatusMode>
        <ViewBtns>
          <ViewBtn><ViewIcon kind="gantt" /></ViewBtn>
          <ViewBtn><ViewIcon kind="cal" /></ViewBtn>
          <ViewBtn><ViewIcon kind="split" /></ViewBtn>
          <ViewBtn $on><ViewIcon kind="grid" /></ViewBtn>
          <ViewBtn><ViewIcon kind="form" /></ViewBtn>
          <Zoomer>−<ZoomLine />+</Zoomer>
        </ViewBtns>
      </StatusBar>

      <Taskbar>
        <StartBtn><WinLogo /></StartBtn>
        <SearchBox>
          <MirrorSearch size={18} color="#333" strokeWidth={1.4} />
          Zur Suche Text hier eingeben
        </SearchBox>
        {TASK_APPS.map((a) => (
          <Slot key={a.key} $run={a.run} $hover={a.hover}>
            {a.icon}
            {a.badge && <Badge>{a.badge}</Badge>}
          </Slot>
        ))}
        <Tray>
          <TrayItem><CloudIcon /></TrayItem>
          <TrayItem $ml={7}>7°C  Bewölkt</TrayItem>
          <TrayItem $ml={20}><ChevronUp size={15} strokeWidth={1.5} /></TrayItem>
          <TrayItem $ml={12}><MeetIcon /></TrayItem>
          <TrayItem $ml={5}><SpeakerIcon /></TrayItem>
          <TrayItem $ml={10}><WifiIcon /></TrayItem>
          <TrayItem $ml={7}><KeyboardIcon /></TrayItem>
          <TrayItem $ml={12}>DEU</TrayItem>
          <Clock>20:59<br />22.11.2021</Clock>
          <TrayItem $ml={20}><NotifyIcon /></TrayItem>
        </Tray>
      </Taskbar>

      <Dialog>
        <DialogTitle>
          Informationen zur Ressource
          <CloseIcon color="#333" s={12} />
        </DialogTitle>
        <DialogTabs>
          <DialogTab $w={63} $pl={6}>Allgemein</DialogTab>
          <DialogTab $w={47} $focus>Kosten</DialogTab>
          <DialogTab $w={2} $sep />
          <DialogTab $w={49} $pl={4} $sep>Notizen</DialogTab>
          <DialogTab $w={120} $pl={7} $sep>Felder (benutzerdef.)</DialogTab>
        </DialogTabs>
        <DialogBody>
          <NameRow>
            <NameLabel>Ressourcen<Underlined>n</Underlined>ame:</NameLabel>
            <NameInput>Müller</NameInput>
          </NameRow>
          <Legend><span><Underlined>K</Underlined>ostensatztabelle</span></Legend>
          <HelpText>
            {'Geben Sie für Kostensätze einen Wert oder eine prozentuale Erhöhung oder\nVerringerung gegenüber dem vorherigen Kostensatz ein. Wenn z. B. die Kosten pro\nEinsatz einer Ressource um 20% sinken, geben Sie -20% ein.'}
          </HelpText>
          <RateTabs>
            <RateTab $w={79} $on>A (Standard)</RateTab>
            <RateTab $w={46}>B</RateTab>
            <RateTab $w={48}>C</RateTab>
            <RateTab $w={47}>D</RateTab>
            <RateTab $w={46}>E</RateTab>
          </RateTabs>
          <RatePanel>
            <RateGrid>
              <RateHead $corner />
              <RateHead>Effektives Datum</RateHead>
              <RateHead>Standardsatz</RateHead>
              <RateHead>Überstundensatz</RateHead>
              <RateHead>Kosten pro Einsat</RateHead>
              {RATE_ROWS.map((r, i) => (
                <React.Fragment key={i}>
                  <RateStub />
                  {r.map((v, j) => (
                    <RateCell key={j} $on={i === 0 && j === 1}>{v}</RateCell>
                  ))}
                </React.Fragment>
              ))}
            </RateGrid>
            <RateScroll>
              <Chevron color="#555" />
              <RateThumb />
              <Chevron color="#555" />
            </RateScroll>
          </RatePanel>
          <DueRow>
            <DueLabel>Ko<Underlined>s</Underlined>tenfälligkeit:</DueLabel>
            <DueSelect>Anteilig<Chevron color="#444" /></DueSelect>
          </DueRow>
          <DialogRule />
          <DialogFooter>
            <DialogBtn><span><Underlined>H</Underlined>ilfe</span></DialogBtn>
            <DialogBtn $w={88} $ml={300}><span><Underlined>E</Underlined>inzelheiten...</span></DialogBtn>
            <DialogBtn $ml={11} $primary>OK</DialogBtn>
            <DialogBtn $ml={11}>Abbrechen</DialogBtn>
          </DialogFooter>
        </DialogBody>
      </Dialog>
      <Spotlight />
      <Pointer width="12" height="19" viewBox="0 0 12 19">
        <path d="M1 1v14l3.500-3 2.500 6 2.500-1-2.500-6h4.500z" fill="#fff" stroke="#222" />
      </Pointer>
    </Page>
  );
}
